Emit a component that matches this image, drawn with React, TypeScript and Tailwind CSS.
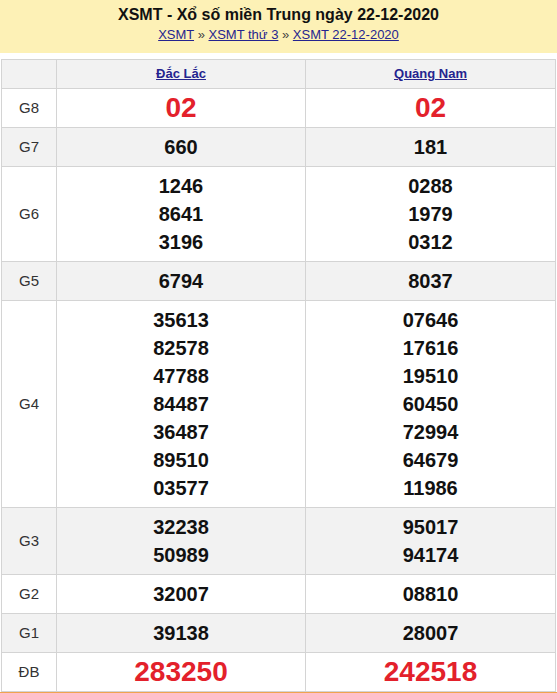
const rows: { label: string; a: string[]; b: string[]; big?: boolean }[] = [
  { label: 'G8', a: ['02'], b: ['02'], big: true },
  { label: 'G7', a: ['660'], b: ['181'] },
  { label: 'G6', a: ['1246', '8641', '3196'], b: ['0288', '1979', '0312'] },
  { label: 'G5', a: ['6794'], b: ['8037'] },
  {
    label: 'G4',
    a: ['35613', '82578', '47788', '84487', '36487', '89510', '03577'],
    b: ['07646', '17616', '19510', '60450', '72994', '64679', '11986'],
  },
  { label: 'G3', a: ['32238', '50989'], b: ['95017', '94174'] },
  { label: 'G2', a: ['32007'], b: ['08810'] },
  { label: 'G1', a: ['39138'], b: ['28007'] },
  { label: 'ĐB', a: ['283250'], b: ['242518'], big: true },
];

function Cell({ nums, big }: { nums: string[]; big?: boolean }) {
  return (
    <td className="border border-[#d4d4d4] py-[5px] text-center align-middle">
      {nums.map((n, i) => (
        <div
          key={i}
          className={
            big
              ? 'text-[28px] font-bold leading-[28px] text-[#e3212b]'
              : 'text-[20px] font-bold leading-[28px] text-[#111]'
          }
        >
          {n}
        </div>
      ))}
    </td>
  );
}

export default function App() {
  return (
    <div
      className="w-[557px] h-[693px] overflow-hidden bg-white"
      style={{ fontFamily: '"Liberation Sans", Arial, sans-serif' }}
    >
      <div className="h-[53px] bg-[#fdf1b6] flex flex-col items-center pt-[5px]">
        <h1 className="text-[16px] font-bold leading-[20px] text-[#111]">
          XSMT - Xổ số miền Trung ngày 22-12-2020
        </h1>
        <div className="text-[13px] leading-[18px] text-[#222] mt-[1px]">
          <a className="text-[#25248f] underline">XSMT</a>
          <span className="text-[#444]"> » </span>
          <a className="text-[#25248f] underline">XSMT thứ 3</a>
          <span className="text-[#444]"> » </span>
          <a className="text-[#25248f] underline">XSMT 22-12-2020</a>
        </div>
      </div>
      <div className="pt-[6px] pl-[1px] border-b-2 border-[#f0a34f] w-[557px]">
        <table className="w-[554px] table-fixed border-collapse">
          <colgroup>
            <col className="w-[55px]" />
            <col className="w-[249px]" />
            <col className="w-[250px]" />
          </colgroup>
          <tbody>
            <tr className="bg-[#f2f2f2]">
              <td className="border border-[#d4d4d4] h-[29px]" />
              <td className="border border-[#d4d4d4] text-center text-[13px] font-bold text-[#25248f]">
                <a className="underline">Đắc Lắc</a>
              </td>
              <td className="border border-[#d4d4d4] text-center text-[13px] font-bold text-[#25248f]">
                <a className="underline">Quảng Nam</a>
              </td>
            </tr>
            {rows.map((r, i) => (
              <tr key={r.label} className={i % 2 === 0 ? 'bg-white' : 'bg-[#f2f2f2]'}>
                <td className="border border-[#d4d4d4] text-center text-[15px] text-[#333]">
                  {r.label}
                </td>
                <Cell nums={r.a} big={r.big} />
                <Cell nums={r.b} big={r.big} />
              </tr>
            ))}
          </tbody>
        </table>
      </div>
    </div>
  );
}
